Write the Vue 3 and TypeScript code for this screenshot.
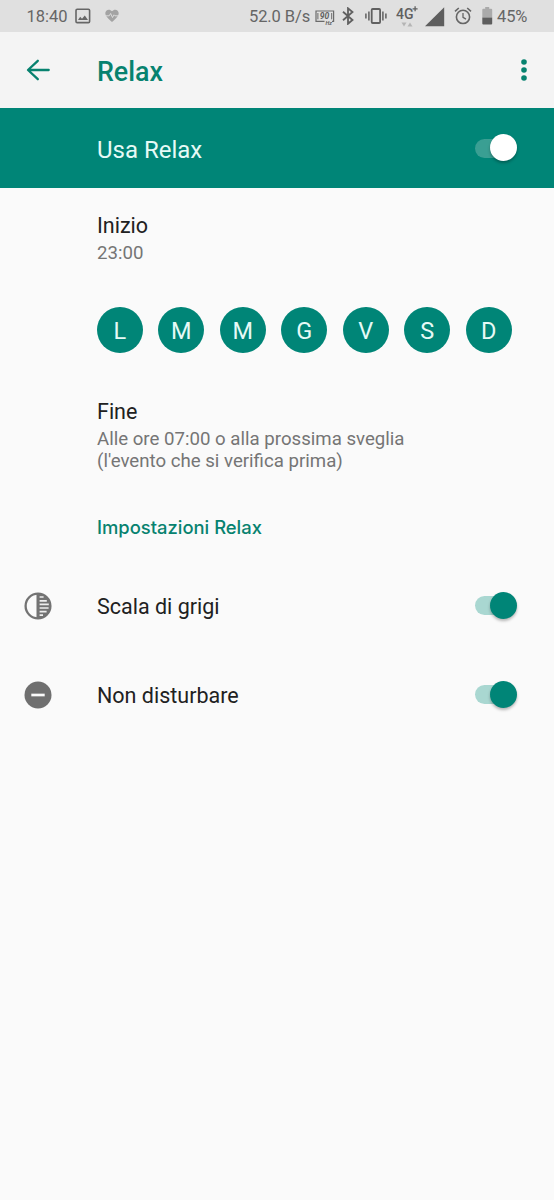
<script setup lang="ts">
import { ref } from 'vue'

interface Day { id: number; label: string; active: boolean }
interface Setting { id: string; label: string; icon: 'grayscale' | 'dnd'; on: boolean }

const enabled = ref(true)
const days = ref<Day[]>(
  ['L', 'M', 'M', 'G', 'V', 'S', 'D'].map((label, id) => ({ id, label, active: true })),
)
const settings = ref<Setting[]>([
  { id: 'gray', label: 'Scala di grigi', icon: 'grayscale', on: true },
  { id: 'dnd', label: 'Non disturbare', icon: 'dnd', on: true },
])
</script>

<template>
  <div class="screen">
    <header class="status">
      <span class="time">18:40</span>
      <svg class="picture" width="16" height="16" viewBox="0 0 16 16">
        <rect x="1" y="1.2" width="13.6" height="13.4" rx="1.2" fill="none" stroke="#666" stroke-width="1.6" />
        <path d="M3 12 5.2 8.8 7 10.8 9.8 7.5 13 12z" fill="#666" />
      </svg>
      <svg class="heart" width="14" height="14" viewBox="0 0 14 14">
        <path d="M7 13 5.8 11.9C2.2 8.7.3 6.8.3 4.3.3 2.2 1.9.7 3.8.7 5 .7 6.2 1.3 7 2.2 7.8 1.3 9 .7 10.2.7c1.9 0 3.5 1.5 3.5 3.6 0 2.5-1.9 4.4-5.5 7.6z" fill="#a3a3a3" />
        <path d="M.5 6.8h3.7L5.6 4.5 7.5 8.5 9 5.8 10 6.8h3.500" fill="none" stroke="#e0e0e0" stroke-width=".9" />
      </svg>
      <span class="speed">52.0 B/s</span>
      <svg class="hz" width="20" height="16" viewBox="0 0 20 16">
        <path d="M9.500 11.300H1V1h17.600v10.300H17" fill="none" stroke="#6a6a6a" stroke-width="1.200" />
        <path d="M2.900 3v6.300M16.700 3v6.300" stroke="#6a6a6a" stroke-width="1" />
        <text x="4.700" y="9.300" class="hz-num">90</text>
        <text x="10.500" y="14.800" class="hz-unit">Hz</text>
      </svg>
      <svg class="bt" width="12" height="18" viewBox="0 0 12 18">
        <path d="M1 4.800 10.500 13 6 16.800V1.300L10.500 5 1 13.200" fill="none" stroke="#606060" stroke-width="1.800" />
      </svg>
      <svg class="vibrate" width="22" height="16" viewBox="0 0 22 16">
        <rect x="6.700" y="1" width="8.400" height="14" rx="1" fill="none" stroke="#606060" stroke-width="1.800" />
        <path d="M.9 5.500v5M3.900 3.500v9M17.900 3.500v9M20.900 5.500v5" stroke="#606060" stroke-width="1.500" />
      </svg>
      <svg class="network" width="23" height="24" viewBox="0 0 23 24">
        <text x="0" y="15.600" class="net">4G</text>
        <path d="M16.600 5.800h5M19.100 3.300v5" stroke="#606060" stroke-width="1.300" />
        <path d="M5.500 19.500h5L8 23.500zM11.500 23.500h5L14 19.500z" fill="#b5b5b5" />
      </svg>
      <svg class="signal" width="20" height="20" viewBox="0 0 20 20"><path d="M19.200.3v19H0z" fill="#5e5e5e" /></svg>
      <svg class="alarm" width="18" height="18" viewBox="0 0 18 18" fill="none" stroke="#666">
        <circle cx="9" cy="9.900" r="6.600" stroke-width="1.600" />
        <path d="M1 4.300 4.800 1M17 4.300 13.200 1" stroke-width="1.600" />
        <path d="M9 6v4.300l3 1.800" stroke-width="1.300" />
      </svg>
      <svg class="battery" width="11" height="18" viewBox="0 0 11 18">
        <path d="M3.200 0h4v1.800h2q1 0 1 1v7.700H.3V2.800q0-1 1-1h1.900z" fill="#aaa" />
        <path d="M.3 10.500h9.900v6q0 1-1 1H1.300q-1 0-1-1z" fill="#5e5e5e" />
      </svg>
      <span class="percent">45%</span>
    </header>

    <nav class="appbar">
      <svg class="back" width="24" height="22" viewBox="0 0 24 22">
        <path d="M22.700 11H2.500M11.800 1.800 2 11 11.800 20.200" fill="none" stroke="#07826f" stroke-width="2.300" stroke-linecap="round" stroke-linejoin="round" />
      </svg>
      <h1 class="title">Relax</h1>
      <svg class="more" width="6" height="22" viewBox="0 0 6 22" fill="#07826f">
        <circle cx="3" cy="3" r="2.800" /><circle cx="3" cy="11" r="2.800" /><circle cx="3" cy="19" r="2.800" />
      </svg>
    </nav>

    <section class="banner" @click="enabled = !enabled">
      <span class="banner-label">Usa Relax</span>
      <span class="switch light" :class="{ off: !enabled }"><i class="track"></i><i class="thumb"></i></span>
    </section>

    <main class="content">
      <section class="start">
        <h2 class="label">Inizio</h2>
        <p class="sub hour">23:00</p>
      </section>
      <div class="days">
        <button v-for="d in days" :key="d.id" class="day" :class="{ idle: !d.active }" @click="d.active = !d.active">{{ d.label }}</button>
      </div>
      <section class="end">
        <h2 class="label">Fine</h2>
        <p class="sub summary">
          <span class="line">Alle ore 07:00 o alla prossima sveglia</span>
          <span class="line">(l'evento che si verifica prima)</span>
        </p>
      </section>
      <h3 class="category">Impostazioni Relax</h3>
      <div v-for="s in settings" :key="s.id" class="row" @click="s.on = !s.on">
        <svg v-if="s.icon === 'grayscale'" class="icon" width="28" height="28" viewBox="0 0 28 28">
          <circle cx="14" cy="14" r="12.400" fill="none" stroke="#737373" stroke-width="2.300" />
          <path d="M12.500 1.500H14a12.500 12.500 0 0 1 0 25h-1.500z" fill="#737373" />
          <path d="M15.600 5h4M15.600 8.800h7.200M15.600 12.400h9.200M15.600 16h9M15.600 19.700h7M15.600 23.200h3.400" stroke="#eee" stroke-width="1.700" />
        </svg>
        <svg v-else class="icon" width="28" height="28" viewBox="0 0 28 28">
          <circle cx="14" cy="14" r="13.500" fill="#6f6f6f" />
          <path d="M7.300 14h13.400" stroke="#fafafa" stroke-width="2.700" />
        </svg>
        <span class="label row-label">{{ s.label }}</span>
        <span class="switch" :class="{ off: !s.on }"><i class="track"></i><i class="thumb"></i></span>
      </div>
    </main>
  </div>
</template>

<style>
body { margin: 0; background: #fafafa; }
</style>

<style scoped>
.screen { width: 554px; height: 1200px; overflow: hidden; background: #fafafa; font-family: Roboto, "Liberation Sans", sans-serif; color: #212121; }
h1, h2, h3, p { margin: 0; font-weight: 400; }
svg { display: block; flex: none; }
span { white-space: nowrap; }

.status { box-sizing: border-box; height: 32px; display: flex; align-items: flex-start; background: #e0e0e0; color: #666; font-size: 16.500px; line-height: 20px; padding-left: 26.500px; }
.time { width: 48.500px; margin-top: 7px; }
.picture { margin-top: 8px; }
.heart { margin: 9px 0 0 14px; }
.speed { width: 66px; margin: 7px 0 0 130px; letter-spacing: -.1px; }
.hz { margin-top: 10px; }
.hz-num { font: italic 700 8.500px Roboto, sans-serif; fill: #606060; }
.hz-unit { font: italic 700 5.500px Roboto, sans-serif; fill: #606060; }
.bt { margin: 7px 0 0 7px; }
.vibrate { margin: 8px 0 0 11px; }
.network { margin-left: 8.500px; margin-top: 3px; }
.net { font: 500 14px Roboto, sans-serif; fill: #606060; }
.signal { margin: 7px 0 0 6.500px; }
.alarm { margin: 7px 0 0 9px; }
.battery { margin: 7px 0 0 10px; }
.percent { margin: 7px 0 0 4px; letter-spacing: -.1px; }

.appbar { box-sizing: border-box; height: 76px; display: flex; align-items: center; background: #f4f4f4; padding: 0 27px 0 26px; }
.title { flex: 1; margin-left: 47px; font-size: 26.800px; font-weight: 500; line-height: 32px; color: #07826f; padding-top: 3px; }

.banner { box-sizing: border-box; height: 80px; display: flex; align-items: center; justify-content: space-between; background: #008577; padding: 0 37px 0 97px; }
.banner-label { color: #e6faf6; font-size: 24px; line-height: 28px; padding-top: 3px; }

.switch { position: relative; width: 44px; height: 28px; flex: none; }
.track { position: absolute; left: 1.500px; top: 4.500px; width: 36px; height: 19px; border-radius: 10px; background: #a9d7d1; }
.thumb { position: absolute; right: 0; top: 0; width: 27px; height: 27px; border-radius: 50%; background: #008577; box-shadow: 0 2px 3px rgba(0, 0, 0, .28); }
.light .track { background: #3a9f93; }
.light .thumb { background: #fff; }
.off .thumb { right: 17px; }

.content { padding-left: 97px; }
.start { box-sizing: border-box; padding-top: 24px; height: 119px; }
.label { font-size: 21.500px; line-height: 28px; color: #212121; }
.sub { font-size: 18.650px; line-height: 22px; color: #757575; }
.hour { margin-top: 2px; }
.summary { margin-top: 2px; }
.days { display: flex; gap: 15.800px; }
.day { width: 45.700px; height: 46px; border: 0; border-radius: 50%; padding: 2px 0 0; background: #008577; color: #e6faf6; font: 400 23.500px/44px Roboto, sans-serif; text-align: center; }
.idle { background: transparent; color: #757575; }
.end { padding-top: 45px; height: 117px; box-sizing: border-box; }
.line { display: block; }
.category { font-family: Inter, Roboto, sans-serif; font-size: 18.400px; font-weight: 500; line-height: 24px; color: #07826f; height: 91px; box-sizing: border-box; padding-top: 44.500px; }
.row { height: 89px; margin-left: -97px; padding: 0 37px 0 24px; display: flex; align-items: center; }
.icon { margin-left: -.4px; }
.row-label { flex: 1; margin-left: 45.400px; padding-top: 2px; }
</style>
